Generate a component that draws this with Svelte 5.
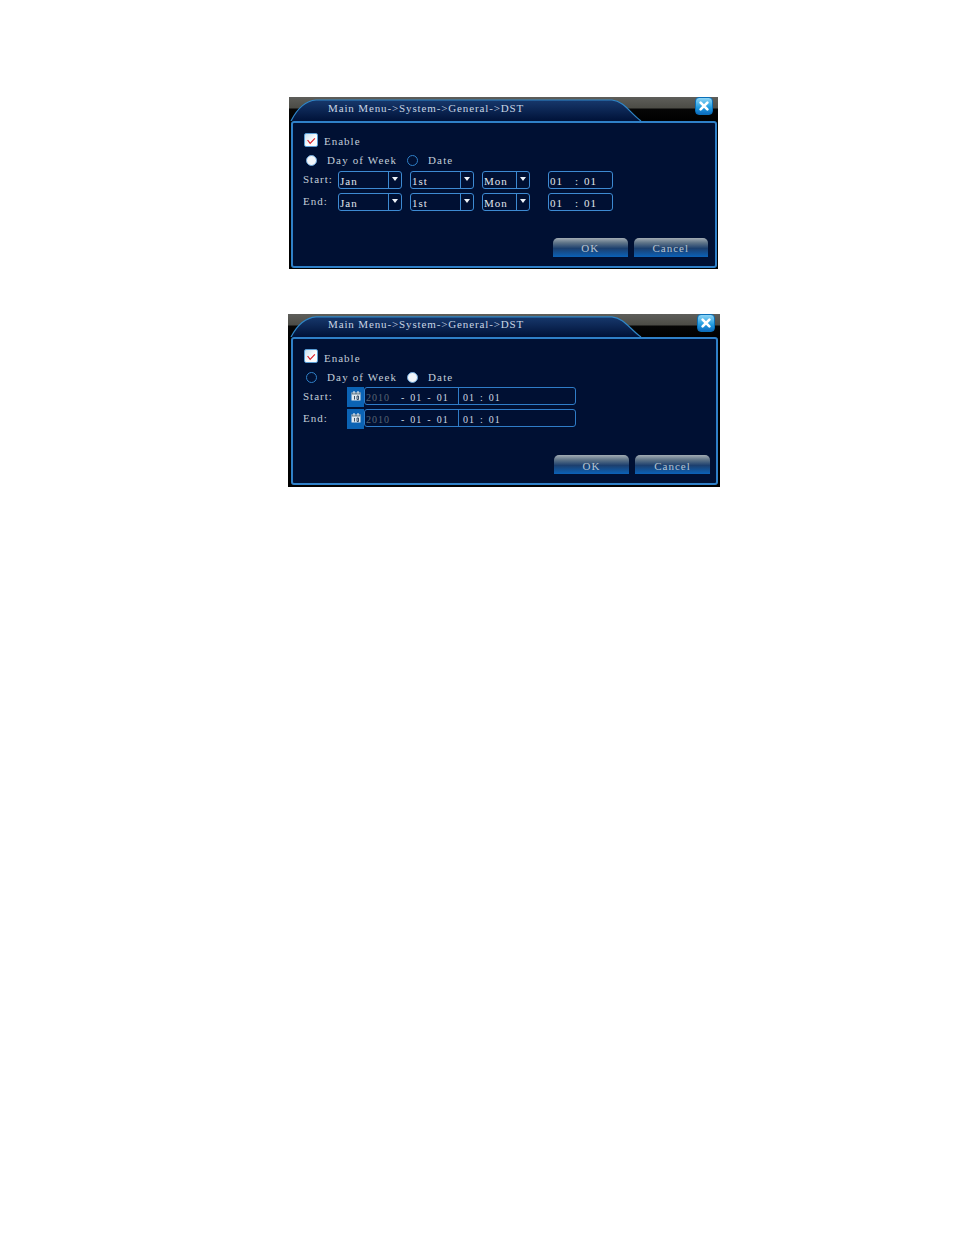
<script>
  const dialogs = [
    { mode: 'week', cls: 'first' },
    { mode: 'date', cls: 'second' }
  ];
  const rows = ['Start:', 'End:'];
</script>

{#snippet select(value, cls)}
  <div class="select {cls}">
    <span class="val">{value}</span>
    <span class="arrow"><i></i></span>
  </div>
{/snippet}

<main>
  {#each dialogs as d}
    <section class="dlg {d.cls}">
      <header>
        <svg class="tab" viewBox="0 0 352 24" preserveAspectRatio="none" aria-hidden="true">
          <defs>
            <linearGradient id="tabfill-{d.cls}" x1="0" y1="0" x2="0" y2="1">
              <stop offset="0" stop-color="#17386c" />
              <stop offset="1" stop-color="#001238" />
            </linearGradient>
          </defs>
          <path d="M1 24 C6 14 13 4 26 3 L322 3 C334 4 340 16 351 24 Z" fill="url(#tabfill-{d.cls})" />
          <path d="M1 24 C6 14 13 4 26 3 L322 3 C334 4 340 16 351 24" fill="none" stroke="#2f86c8" stroke-width="1.2" />
        </svg>
        <h1>Main Menu-&gt;System-&gt;General-&gt;DST</h1>
        <button class="close" aria-label="Close">
          <svg viewBox="0 0 18 18" aria-hidden="true">
            <path d="M5.2 5.2 L12.8 12.8 M12.8 5.2 L5.2 12.8" stroke="#fff" stroke-width="3" stroke-linecap="round" />
          </svg>
        </button>
      </header>

      <div class="panel">
        <label class="enable">
          <span class="check">
            <svg viewBox="0 0 14 14" aria-hidden="true"><path d="M3 7 L6 11 L11.5 5" fill="none" stroke="#d8202a" stroke-width="1.4" /></svg>
          </span>
          <span class="etext">Enable</span>
        </label>

        <div class="radios">
          <span class="radio" class:on={d.mode === 'week'}></span>
          <span class="rlabel week">Day of Week</span>
          <span class="radio" class:on={d.mode === 'date'}></span>
          <span class="rlabel">Date</span>
        </div>

        {#each rows as label}
          <div class="row">
            <span class="label">{label}</span>
            {#if d.mode === 'week'}
              {@render select('Jan', 'wide')}
              {@render select('1st', 'wide')}
              {@render select('Mon', 'narrow')}
              <div class="time"><span>01</span><span class="colon">:</span><span>01</span></div>
            {:else}
              <span class="cal">
                <svg viewBox="0 0 12 12" aria-hidden="true">
                  <rect x="1.5" y="2.5" width="9" height="8" fill="#dfe8ee" />
                  <rect x="1.5" y="2.5" width="9" height="2" fill="#6d8494" />
                  <path d="M4 1 V3.5 M8 1 V3.5" stroke="#fff" stroke-width="1" />
                  <path d="M4.5 6 V9.5 M7 6 H8.5 V9.5 H7 Z" fill="none" stroke="#24405c" stroke-width="0.9" />
                </svg>
              </span>
              <div class="datefield">
                <span class="year">2010</span>
                <span class="md">- 01 - 01</span>
                <span class="clock">01 : 01</span>
              </div>
            {/if}
          </div>
        {/each}

        <footer>
          <button class="btn">OK</button>
          <button class="btn">Cancel</button>
        </footer>
      </div>
    </section>
  {/each}
</main>

<style>
  :global(body) {
    margin: 0;
    background: #fff;
  }
  main {
    height: 1235px;
    padding-top: 97px;
    box-sizing: border-box;
    font-family: "Liberation Serif", serif;
    font-size: 11px;
    letter-spacing: 1px;
    color: #c2ced9;
  }
  .dlg {
    display: flex;
    flex-direction: column;
    background: #000;
    box-sizing: border-box;
  }
  .first {
    width: 429px;
    height: 172px;
    margin-left: 289px;
    padding: 0 1px 1px 2px;
  }
  .second {
    width: 432px;
    height: 173px;
    margin: 45px 0 0 288px;
    padding: 0 2px 2px 3px;
  }
  header {
    position: relative;
    flex: none;
    height: 24px;
    margin: 0 -1px 0 -2px;
    background: linear-gradient(#5e5e5a 0, #4c4c46 11px, #060606 12px, #000 100%);
  }
  .second header {
    height: 23px;
    margin: 0 -2px 0 -3px;
  }
  .tab {
    position: absolute;
    left: 1px;
    top: 0;
    width: 352px;
    height: 100%;
  }
  .second .tab {
    left: 2px;
  }
  h1 {
    position: relative;
    margin: 0;
    padding: 4px 0 0 39px;
    font-size: 11px;
    line-height: 14px;
    font-weight: normal;
    letter-spacing: 0.87px;
    color: #c8d5e4;
  }
  .second h1 {
    padding: 3px 0 0 40px;
  }
  .close {
    position: absolute;
    right: 5px;
    top: 0;
    width: 18px;
    height: 18px;
    padding: 0;
    border: 1px solid #0a6fb8;
    border-radius: 4px;
    background: linear-gradient(#8fd6f6, #1f9be0 60%, #0d6cc0);
  }
  .close svg {
    display: block;
    width: 16px;
    height: 16px;
  }

  .panel {
    flex: 1;
    display: flex;
    flex-direction: column;
    box-sizing: border-box;
    padding: 10px 7px 9px 11px;
    border: 2px solid #2f80c8;
    border-radius: 3px;
    background: #001033;
  }
  .second .panel {
    padding: 10px 6px 9px 11px;
  }
  .enable {
    display: flex;
    align-items: center;
    gap: 6px;
    height: 14px;
    font-size: 11px;
  }
  .etext {
    padding-top: 2px;
  }
  .second .etext {
    padding-top: 4px;
  }
  .check {
    width: 14px;
    height: 14px;
    margin-top: -1px;
    border-radius: 2px;
    border: 1px solid #5a9ed6;
    box-sizing: border-box;
    background: linear-gradient(135deg, #c6dff0, #fafcfd 55%);
  }
  .check svg {
    display: block;
    width: 100%;
    height: 100%;
  }
  .radios {
    display: flex;
    align-items: center;
    height: 16px;
    margin-top: 5px;
    padding-left: 2px;
    letter-spacing: 1.15px;
  }
  .second .radios {
    margin-top: 6px;
  }
  .radio {
    width: 11px;
    height: 11px;
    box-sizing: border-box;
    border: 1.5px solid #2f80c8;
    border-radius: 50%;
  }
  .radio.on {
    background: #f2f6fa;
    border-color: #6fa6d8;
  }
  .rlabel {
    margin-left: 10px;
  }
  .rlabel.week {
    width: 80px;
  }
  .row {
    display: flex;
    align-items: flex-start;
    height: 18px;
    margin-top: 3px;
  }
  .second .row {
    margin-top: 2px;
  }
  .row + .row,
  .second .row + .row {
    margin-top: 4px;
  }
  .label {
    width: 35px;
    margin-left: -1px;
    line-height: 16px;
    flex: none;
  }
  .second .label {
    line-height: 18px;
  }
  .select,
  .time {
    display: flex;
    box-sizing: border-box;
    height: 18px;
    border: 1.5px solid #3d8ad2;
    border-radius: 3px;
    margin-right: 8px;
    color: #e0e7ee;
    line-height: 18px;
  }
  .wide {
    width: 64px;
  }
  .narrow {
    width: 48px;
    margin-right: 18px;
  }
  .val {
    flex: 1;
    padding-left: 1px;
  }
  .arrow {
    display: flex;
    align-items: center;
    justify-content: center;
    width: 12px;
    border-left: 1px solid #3d8ad2;
  }
  .arrow i {
    width: 0;
    height: 0;
    border: 3.5px solid transparent;
    border-top: 4px solid #eef3f8;
    border-bottom: 0;
    margin-top: -3px;
  }
  .time {
    width: 65px;
    padding-left: 1px;
    margin-right: 0;
  }
  .colon {
    margin: 0 5px 0 12px;
  }
  .cal {
    flex: none;
    display: flex;
    align-items: center;
    justify-content: center;
    width: 17px;
    height: 20px;
    margin-left: 9px;
    background: #0b63b4;
  }
  .cal svg {
    width: 12px;
    height: 12px;
    margin-top: -3px;
  }
  .datefield {
    display: flex;
    box-sizing: border-box;
    width: 212px;
    height: 18px;
    border: 1.5px solid #2f7cc8;
    border-radius: 3px;
    line-height: 19px;
    font-size: 10px;
    word-spacing: 1.5px;
    color: #cfd9e3;
  }
  .year {
    width: 35px;
    padding-left: 1px;
    color: #596673;
  }
  .md {
    width: 57px;
  }
  .clock {
    padding-left: 4px;
    border-left: 1px solid #2f7cc8;
  }
  footer {
    display: flex;
    justify-content: flex-end;
    gap: 6px;
    margin-top: auto;
  }
  .btn {
    width: 74.5px;
    height: 19px;
    padding: 2px 0 0;
    border: 0;
    border-radius: 5px 5px 0 0;
    background: linear-gradient(#a2acb4 0, #5f7488 25%, #1c3f6e 55%, #0b62b8 100%);
    font: inherit;
    letter-spacing: 1px;
    color: #b8c4d0;
  }
  .first .btn {
    padding-top: 0;
  }
  .second .btn {
    width: 75px;
  }
</style>
